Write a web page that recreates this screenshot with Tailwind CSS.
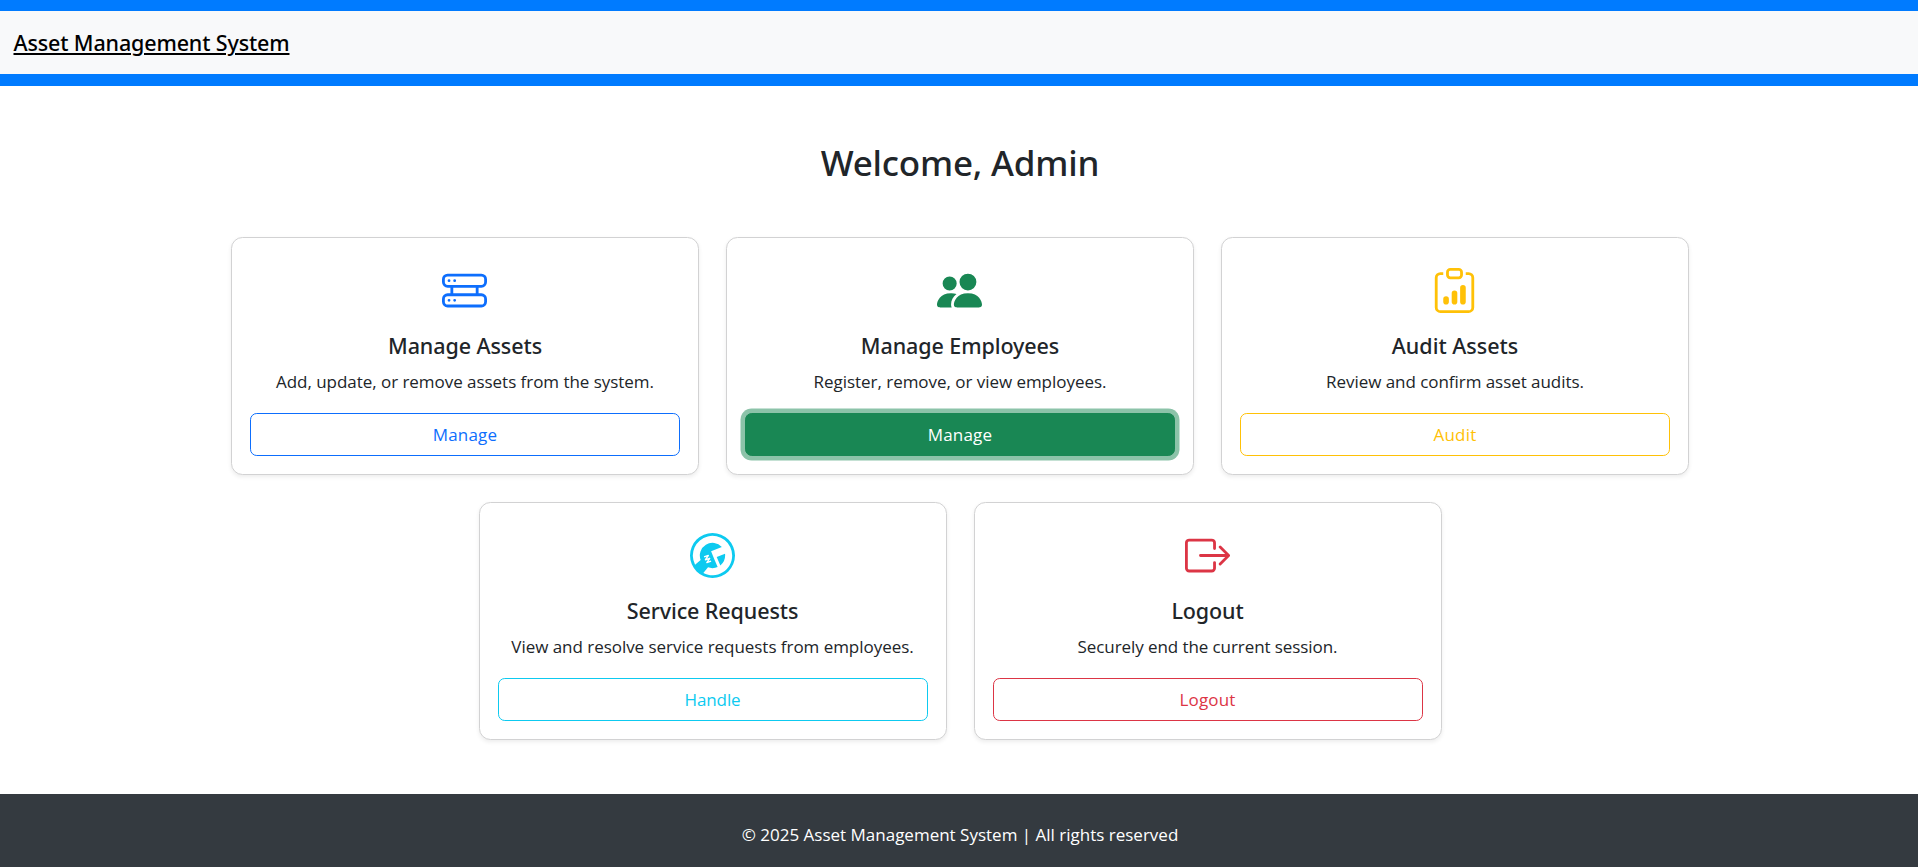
<!DOCTYPE html>
<html lang="en">
<head>
<meta charset="utf-8">
<title>Asset Management System</title>
<script src="https://cdn.jsdelivr.net/npm/@tailwindcss/browser@4"></script>
</head>
<body class="h-screen overflow-hidden bg-white text-[#212529] font-['Open_Sans','Noto_Sans',sans-serif] text-[17px] leading-[27px]">
<div class="flex h-[867px] w-[1920px] flex-col">
  <header class="h-[86px] shrink-0 border-t-[11px] border-b-[12px] border-[#007bff] bg-[#f8f9fa] pl-[13.5px] pt-[15px]">
    <a href="#" class="font-['Noto_Sans',sans-serif] text-[21.5px] leading-[34px] font-medium tracking-[-0.14px] text-black underline decoration-2 underline-offset-2">Asset Management System</a>
  </header>

  <main class="flex grow flex-col items-center pt-[55px]">
    <h1 class="font-['Noto_Sans',sans-serif] text-[35px] leading-[43px] font-medium tracking-[-0.2px]">Welcome, Admin</h1>
    <div class="mt-[53.3px] flex w-[1485px] flex-wrap justify-center gap-x-[27px] gap-y-[27.7px]">

      <section class="flex h-[237.3px] w-[468px] flex-col items-center rounded-[11.5px] border border-[#d2d2d3] bg-white px-[18px] pt-[29.4px] shadow-[0_2px_4.5px_rgba(0,0,0,0.075)]">
        <svg class="mr-px size-[45px] text-[#0d6efd]" viewBox="0 0 16 16" fill="currentColor"><path d="M4.5 5a.5.5 0 1 0 0-1 .5.5 0 0 0 0 1M3 4.5a.5.5 0 1 1-1 0 .5.5 0 0 1 1 0m2 7a.5.5 0 1 1-1 0 .5.5 0 0 1 1 0m-2.5.5a.5.5 0 1 0 0-1 .5.5 0 0 0 0 1"/><path d="M2 2a2 2 0 0 0-2 2v1a2 2 0 0 0 2 2h1v2H2a2 2 0 0 0-2 2v1a2 2 0 0 0 2 2h12a2 2 0 0 0 2-2v-1a2 2 0 0 0-2-2h-1V7h1a2 2 0 0 0 2-2V4a2 2 0 0 0-2-2zm13 2v1a1 1 0 0 1-1 1H2a1 1 0 0 1-1-1V4a1 1 0 0 1 1-1h12a1 1 0 0 1 1 1m0 7v1a1 1 0 0 1-1 1H2a1 1 0 0 1-1-1v-1a1 1 0 0 1 1-1h12a1 1 0 0 1 1 1m-3-4v2H4V7z"/></svg>
        <h2 class="mt-[19.5px] font-['Noto_Sans',sans-serif] text-[21.5px] font-medium tracking-[-0.08px]">Manage Assets</h2>
        <p class="mt-[8.7px] tracking-[-0.04px]">Add, update, or remove assets from the system.</p>
        <button class="mt-[18px] h-[42.8px] w-full rounded-[6.75px] border border-[#0d6efd] tracking-[0.2px] text-[#0d6efd]">Manage</button>
      </section>

      <section class="flex h-[237.3px] w-[468px] flex-col items-center rounded-[11.5px] border border-[#d2d2d3] bg-white px-[18px] pt-[29.4px] shadow-[0_2px_4.5px_rgba(0,0,0,0.075)]">
        <svg class="mr-px size-[45px] text-[#198754]" viewBox="0 0 16 16" fill="currentColor"><path d="M7 14s-1 0-1-1 1-4 5-4 5 3 5 4-1 1-1 1zm4-6a3 3 0 1 0 0-6 3 3 0 0 0 0 6m-5.784 6A2.24 2.24 0 0 1 5 13c0-1.355.68-2.75 1.936-3.72A6.3 6.3 0 0 0 5 9c-4 0-5 3-5 4s1 1 1 1zM4.5 8a2.5 2.5 0 1 0 0-5 2.5 2.5 0 0 0 0 5"/></svg>
        <h2 class="mt-[19.5px] font-['Noto_Sans',sans-serif] text-[21.5px] font-medium tracking-[-0.08px]">Manage Employees</h2>
        <p class="mt-[8.7px] tracking-[-0.04px]">Register, remove, or view employees.</p>
        <button class="mt-[18px] h-[42.8px] w-full rounded-[6.75px] border border-[#198754] bg-[#198754] tracking-[0.2px] text-white shadow-[0_0_0_4.5px_rgba(25,135,84,0.5)]">Manage</button>
      </section>

      <section class="flex h-[237.3px] w-[468px] flex-col items-center rounded-[11.5px] border border-[#d2d2d3] bg-white px-[18px] pt-[29.4px] shadow-[0_2px_4.5px_rgba(0,0,0,0.075)]">
        <svg class="mr-px size-[45px] text-[#ffc107]" viewBox="0 0 16 16" fill="currentColor"><path d="M4 11a1 1 0 1 1 2 0v1a1 1 0 1 1-2 0zm6-4a1 1 0 1 1 2 0v5a1 1 0 1 1-2 0zM7 9a1 1 0 0 1 2 0v3a1 1 0 1 1-2 0z"/><path d="M4 1.5H3a2 2 0 0 0-2 2V14a2 2 0 0 0 2 2h10a2 2 0 0 0 2-2V3.5a2 2 0 0 0-2-2h-1v1h1a1 1 0 0 1 1 1V14a1 1 0 0 1-1 1H3a1 1 0 0 1-1-1V3.5a1 1 0 0 1 1-1h1z"/><path d="M9.5 1a.5.5 0 0 1 .5.5v1a.5.5 0 0 1-.5.5h-3a.5.5 0 0 1-.5-.5v-1a.5.5 0 0 1 .5-.5zm-3-1A1.5 1.5 0 0 0 5 1.5v1A1.5 1.5 0 0 0 6.5 4h3A1.5 1.5 0 0 0 11 2.5v-1A1.5 1.5 0 0 0 9.5 0z"/></svg>
        <h2 class="mt-[19.5px] font-['Noto_Sans',sans-serif] text-[21.5px] font-medium">Audit Assets</h2>
        <p class="mt-[8.7px] tracking-[-0.05px]">Review and confirm asset audits.</p>
        <button class="mt-[18px] h-[42.8px] w-full rounded-[6.75px] border border-[#ffc107] tracking-[0.25px] text-[#ffc107]">Audit</button>
      </section>

      <section class="flex h-[237.3px] w-[468px] flex-col items-center rounded-[11.5px] border border-[#d2d2d3] bg-white px-[18px] pt-[29.4px] shadow-[0_2px_4.5px_rgba(0,0,0,0.075)]">
        <svg class="size-[45px] text-[#0dcaf0]" viewBox="0 0 16 16" fill="currentColor"><path d="M12.496 8a4.5 4.5 0 0 1-1.703 3.526L9.497 8.5l2.959-1.11q.04.3.04.61"/><path d="M16 8A8 8 0 1 1 0 8a8 8 0 0 1 16 0m-1 0a7 7 0 1 0-13.202 3.249l1.988-1.657a4.5 4.5 0 0 1 7.537-4.623L7.497 6.5l1 2.5 1.333 3.11c-.56.251-1.18.39-1.833.39a4.5 4.5 0 0 1-1.592-.29L4.747 14.2A7 7 0 0 0 15 8m-8.295.139a.25.25 0 0 0-.288-.376l-1.5.5.159.474.808-.27-.595.894a.25.25 0 0 0 .287.376l.808-.27-.595.894a.25.25 0 0 0 .287.376l1.5-.5-.159-.474-.808.27.596-.894a.25.25 0 0 0-.288-.376l-.808.27z"/></svg>
        <h2 class="mt-[19.5px] font-['Noto_Sans',sans-serif] text-[21.5px] font-medium tracking-[-0.1px]">Service Requests</h2>
        <p class="mt-[8.7px] tracking-[-0.04px]">View and resolve service requests from employees.</p>
        <button class="mt-[18px] h-[42.8px] w-full rounded-[6.75px] border border-[#0dcaf0] tracking-[-0.1px] text-[#0dcaf0]">Handle</button>
      </section>

      <section class="flex h-[237.3px] w-[468px] flex-col items-center rounded-[11.5px] border border-[#d2d2d3] bg-white px-[18px] pt-[29.4px] shadow-[0_2px_4.5px_rgba(0,0,0,0.075)]">
        <svg class="size-[45px] text-[#dc3545]" viewBox="0 0 16 16" fill="currentColor"><path d="M10 12.5a.5.5 0 0 1-.5.5h-8a.5.5 0 0 1-.5-.5v-9a.5.5 0 0 1 .5-.5h8a.5.5 0 0 1 .5.5v2a.5.5 0 0 0 1 0v-2A1.5 1.5 0 0 0 9.5 2h-8A1.5 1.5 0 0 0 0 3.5v9A1.5 1.5 0 0 0 1.5 14h8a1.5 1.5 0 0 0 1.5-1.5v-2a.5.5 0 0 0-1 0z"/><path d="M15.854 8.354a.5.5 0 0 0 0-.708l-3-3a.5.5 0 0 0-.708.708L14.293 7.5H5.5a.5.5 0 0 0 0 1h8.793l-2.147 2.146a.5.5 0 0 0 .708.708z"/></svg>
        <h2 class="mt-[19.5px] font-['Noto_Sans',sans-serif] text-[21.5px] font-medium tracking-[-0.1px]">Logout</h2>
        <p class="mt-[8.7px] tracking-[-0.08px]">Securely end the current session.</p>
        <button class="mt-[18px] h-[42.8px] w-full rounded-[6.75px] border border-[#dc3545] tracking-[0.2px] text-[#dc3545]">Logout</button>
      </section>
    </div>
  </main>

  <footer class="h-[73px] shrink-0 bg-[#343a40] pt-[27px] text-center text-white"><span>© 2025 Asset Management System | All rights reserved</span></footer>
</div>
</body>
</html>
